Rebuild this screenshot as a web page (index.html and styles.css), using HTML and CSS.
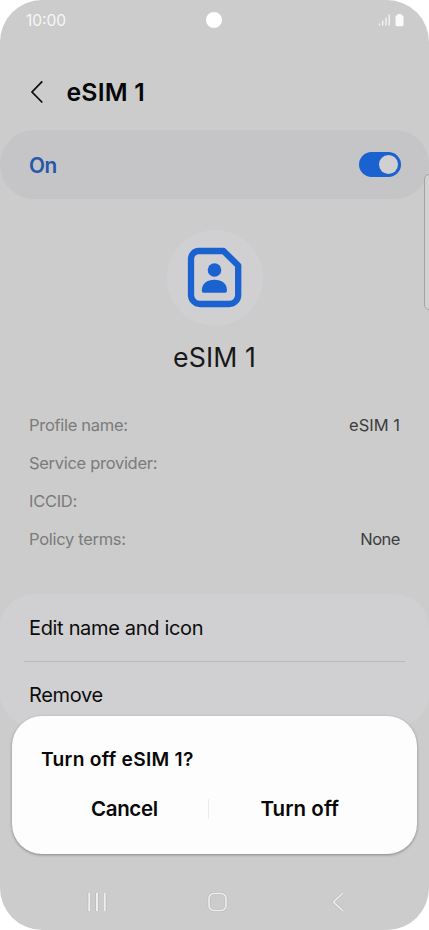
FILE: index.html
```
<!DOCTYPE html>
<html lang="en">
<head>
<meta charset="utf-8">
<title>eSIM 1</title>
<link rel="stylesheet" href="styles.css">
</head>
<body>
<div class="phone">
  <header class="status">
    <span class="time">10:00</span>
    <span class="camera"></span>
    <svg class="indicators" width="26" height="14" viewBox="0 0 26 14">
      <path d="M1.500 10.500V12.500M4.700 7.500V12.500M8 4.500V12.500M11.200 1.500V12.500" stroke="#f6f6f6" stroke-width="1.300"/>
      <path d="M19.500 1h4v1.200h.5a1.500 1.500 0 0 1 1.500 1.500v8a1.500 1.500 0 0 1-1.500 1.500h-5a1.500 1.500 0 0 1-1.500-1.500v-8a1.500 1.500 0 0 1 1.500-1.500h.5z" fill="#fafafa"/>
    </svg>
  </header>
  <div class="titlebar">
    <svg class="back" width="14" height="24" viewBox="0 0 14 24"><path d="M12.300 1.300L2 12L12.300 22.500" fill="none" stroke="#090909" stroke-width="1.700"/></svg>
    <h1>eSIM 1</h1>
  </div>
  <div class="switchbar">
    <span class="on">On</span>
    <span class="toggle"><span class="knob"></span></span>
  </div>
  <div class="profile">
    <div class="avatar">
      <svg width="56" height="62" viewBox="0 0 56 62">
        <path d="M12 4H36.500L51.200 18.500V48A9 9 0 0 1 42.200 57H13A9 9 0 0 1 4 48V12A8 8 0 0 1 12 4Z" fill="none" stroke="#1a62d0" stroke-width="6.300" stroke-linejoin="round"/>
        <circle cx="27.500" cy="23" r="6.800" fill="#1a62d0"/>
        <path d="M14.800 43.800C14.800 36 20.200 32.700 27.500 32.700S40 36 40 43.800Q40 45.700 38.200 45.700H16.600Q14.800 45.700 14.800 43.800Z" fill="#1a62d0"/>
      </svg>
    </div>
    <h2>eSIM 1</h2>
  </div>
  <dl class="details">
    <div class="row"><dt>Profile name:</dt><dd>eSIM 1</dd></div>
    <div class="row"><dt>Service provider:</dt><dd></dd></div>
    <div class="row"><dt>ICCID:</dt><dd></dd></div>
    <div class="row"><dt>Policy terms:</dt><dd class="none">None</dd></div>
  </dl>
  <div class="actions">
    <div class="action">Edit name and icon</div>
    <div class="action">Remove</div>
  </div>
  <div class="edge-handle"></div>
  <div class="dialog">
    <p class="question">Turn off eSIM 1?</p>
    <div class="buttons">
      <span class="button cancel">Cancel</span>
      <span class="divider"></span>
      <span class="button off">Turn off</span>
    </div>
  </div>
  <nav class="navbar">
    <svg width="22" height="22" viewBox="0 0 22 22"><path d="M3.300 2V20M11 2V20M18.700 2V20" class="halo wide"/><path d="M3.300 2V20M11 2V20M18.700 2V20" class="line wideline"/></svg>
    <svg width="22" height="22" viewBox="0 0 22 22"><rect x="2" y="2.500" width="17" height="17" rx="5" class="halo"/><rect x="2" y="2.500" width="17" height="17" rx="5" class="line"/></svg>
    <svg width="22" height="22" viewBox="0 0 22 22"><path d="M16 2L6.500 11L16 20" class="halo"/><path d="M16 2L6.500 11L16 20" class="line"/></svg>
  </nav>
</div>
</body>
</html>
```
FILE: styles.css
```
* { box-sizing: border-box; }
body { margin: 0; background: #fff; font-family: Inter, "Liberation Sans", sans-serif; }
h1, h2, p, dl, dd { margin: 0; font-weight: 400; }
span, h1, h2, p, dt, dd { white-space: nowrap; }
svg { display: block; }
.phone { position: relative; width: 429px; height: 930px; overflow: hidden; border-radius: 42px; background: #ccc; display: flex; flex-direction: column; }
.status { height: 40px; padding: 0 25px 0 26px; display: grid; grid-template-columns: 180px 16px 1fr; align-items: center; }
.time { color: #f7f7f7; font-size: 15.500px; line-height: 38px; padding-top: 2px; }
.camera { width: 16px; height: 16px; border-radius: 50%; background: #fff; }
.indicators { justify-self: end; }
.titlebar { height: 90px; padding: 14px 0 0 30px; display: flex; align-items: center; gap: 22.500px; }
h1 { font-size: 24.800px; font-weight: 600; color: #080808; line-height: 30px; letter-spacing: .2px; }
.switchbar { height: 69px; border-radius: 34px; background: #c5c5c7; padding: 0 28.500px 0 29px; display: flex; align-items: center; justify-content: space-between; }
.on { font-size: 20.800px; font-weight: 600; color: #2559a8; line-height: 30px; letter-spacing: -.4px; padding-top: 2px; }
.toggle { width: 42px; height: 25px; border-radius: 13px; background: #1a62d0; padding: 3px; display: flex; justify-content: flex-end; }
.knob { width: 19px; height: 19px; border-radius: 50%; background: #d0d0d3; }
.profile { margin-top: 31px; display: flex; flex-direction: column; align-items: center; }
.avatar { width: 96px; height: 96px; border-radius: 50%; background: #d0d0d3; display: flex; align-items: center; justify-content: center; }
h2 { margin-top: 11px; font-size: 26.700px; line-height: 40px; color: #181818; letter-spacing: .1px; }
.details { margin-top: 29.500px; padding: 0 29px; }
.row { height: 37.800px; display: flex; align-items: center; justify-content: space-between; }
dt, dd { font-size: 16.500px; line-height: 24px; }
dt { color: #7b7b7b; letter-spacing: -.3px; }
dd { color: #3d3d3d; }
.none { letter-spacing: -.5px; }
.actions { margin-top: 36.600px; height: 133px; border-radius: 34px; background: #d0d0d2; padding: 0 24px; }
.action { height: 66.500px; padding-left: 5px; font-size: 20px; line-height: 68px; color: #0c0c0c; letter-spacing: -.33px; }
.action + .action { border-top: 1px solid #b9b9bb; line-height: 66px; }
.edge-handle { position: absolute; left: 424px; top: 174px; width: 10px; height: 136px; border: 1.500px solid #a5a5a5; border-radius: 5px; background: #d2d2d2; }
.dialog { position: absolute; left: 12px; top: 716px; width: 405px; height: 137.500px; border-radius: 30px; background: #fdfdfe; box-shadow: 0 1px 3px rgba(0,0,0,.35); padding: 28px 0 0; color: #080808; }
.question { padding-left: 29px; font-size: 19.200px; font-weight: 600; line-height: 30px; letter-spacing: .28px; }
.buttons { margin-top: 14px; height: 42px; display: grid; grid-template-columns: 196px 1px 1fr; align-items: center; }
.button { font-size: 20.500px; font-weight: 600; line-height: 42px; }
.cancel { padding-left: 79px; letter-spacing: -.35px; }
.off { padding-left: 51.500px; letter-spacing: .05px; }
.divider { height: 20px; background: #ececee; }
.navbar { margin-top: auto; height: 56px; padding: 0 80px 0 86px; display: flex; align-items: center; justify-content: space-between; }
.halo { fill: none; stroke: #bdbdbd; stroke-width: 3; }
.line { fill: none; stroke: #eee; stroke-width: 1.600; }
.wide { stroke-width: 3.600; }
.wideline { stroke-width: 2; }
```
